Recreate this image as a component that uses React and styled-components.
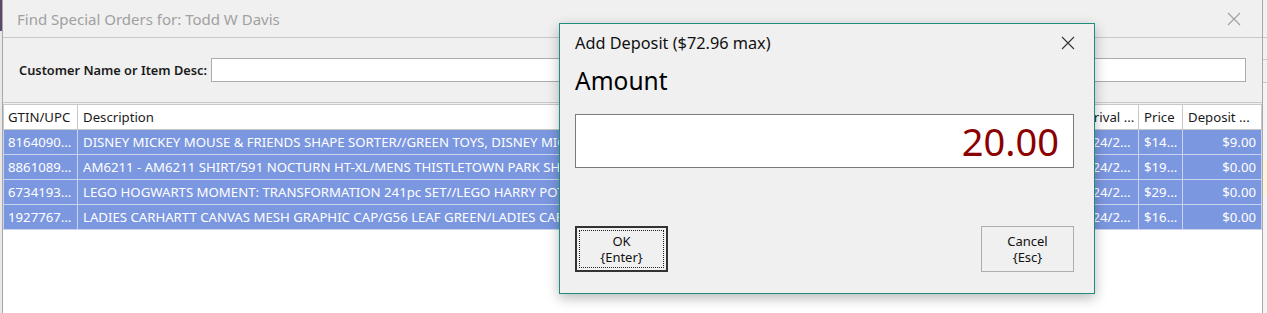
import React from "react";
import styled, { createGlobalStyle } from "styled-components";

const Global = createGlobalStyle`
  html, body { margin: 0; padding: 0; }
  body {
    width: 1267px; height: 313px; overflow: hidden;
    background: #f0f0f0;
    font-family: "Segoe UI", "Noto Sans", "Open Sans", sans-serif;
  }
`;

const Screen = styled.div`
  position: relative;
  display: flex;
  width: 1267px;
  height: 313px;
  overflow: hidden;
`;

const LeftStrip = styled.div`
  width: 2px;
  background: linear-gradient(#5a4a6a 0 10%, #e8e8e8 10% 100%);
`;

const Window = styled.div`
  width: 1259px;
  height: 313px;
  border-left: 1px solid #a8a8a8;
  border-right: 1px solid #a8a8a8;
  display: flex;
  flex-direction: column;
  background: #f0f0f0;
`;

const BackStrip = styled.div`
  flex: 1;
  display: flex;
  flex-direction: column;
  background: #f4f4f4;
`;

const BackPiece = styled.div`
  height: ${(p) => p.h}px;
  background: ${(p) => p.bg};
  border-bottom: ${(p) => (p.line ? "1px solid #c8c8c8" : "none")};
`;

const TitleBar = styled.div`
  height: 37px;
  display: flex;
  align-items: center;
  justify-content: space-between;
  padding: 0 21px 0 14px;
  border-bottom: 1px solid #c8c8c8;
  color: #a0a0a0;
  font-size: 15px;
`;

const CloseX = styled.svg`
  display: block;
`;

const SearchPanel = styled.div`
  height: 64px;
  display: flex;
  align-items: center;
  padding: 0 16px 0 16px;
  gap: 4px;
  border-bottom: 1px solid #c8c8c8;
`;

const Label = styled.label`
  font-size: 12.8px;
  font-weight: 600;
  color: #1a1a1a;
  white-space: nowrap;
`;

const SearchInput = styled.div`
  flex: 1;
  height: 22px;
  background: #fff;
  border: 1px solid #acacac;
`;

const Grid = styled.div`
  flex: 1;
  margin-top: 1px;
  background: #fff;
  border-top: 1px solid #c8c8c8;
  display: flex;
  flex-direction: column;
`;

const cols = "75px 997px 64px 44px 1fr";

const Row = styled.div`
  display: grid;
  grid-template-columns: ${cols};
  height: 24px;
  background: ${(p) => (p.head ? "#fff" : "#7b97e0")};
  border-bottom: 1px solid ${(p) => (p.head ? "#c8c8c8" : "#c9d3ee")};
`;

const Cell = styled.div`
  display: flex;
  align-items: center;
  justify-content: ${(p) => (p.right ? "flex-end" : "flex-start")};
  padding: 0 5px 0 5px;
  overflow: hidden;
  white-space: nowrap;
  font-size: 13.2px;
  color: ${(p) => (p.head ? "#1a1a1a" : "#fff")};
  border-right: 1px solid ${(p) => (p.head ? "#c8c8c8" : "#c9d3ee")};
  ${(p) => (p.first ? `border-left: 1px solid ${p.head ? "#c8c8c8" : "#c9d3ee"}; padding-left: 4px;` : "")}
`;

const Dialog = styled.div`
  position: absolute;
  left: 559px;
  top: 23px;
  box-sizing: border-box;
  width: 536px;
  height: 271px;
  background: #f0f0f0;
  border: 1px solid #1d8e7c;
  box-shadow: 0 4px 12px rgba(0, 0, 0, 0.28);
  display: flex;
  flex-direction: column;
  padding: 0 20px 0 15px;
`;

const DlgTitle = styled.div`
  height: 38px;
  display: flex;
  align-items: center;
  justify-content: space-between;
  font-size: 16.3px;
  color: #111;
  margin-right: -1px;
`;

const Heading = styled.div`
  font-size: 24.5px;
  color: #000;
  height: 36px;
  display: flex;
  align-items: center;
`;

const AmountBox = styled.div`
  margin-top: 16px;
  height: 52px;
  background: #fff;
  border: 1px solid #7a7a7a;
  display: flex;
  align-items: center;
  justify-content: flex-end;
  padding-right: 14px;
  font-size: 38px;
  color: #8b0000;
`;

const Buttons = styled.div`
  margin-top: 58px;
  display: flex;
  justify-content: space-between;
`;

const Button = styled.button`
  width: 93px;
  height: 46px;
  box-sizing: border-box;
  font-family: inherit;
  font-size: 13px;
  line-height: 16px;
  color: #111;
  background: #f0f0f0;
  border: ${(p) => (p.primary ? "2px solid #333" : "1px solid #adadad")};
  padding: 0;
  display: flex;
  align-items: center;
  justify-content: center;
  position: relative;
`;

const Focus = styled.span`
  position: absolute;
  inset: 2px;
  border: 1px dotted #222;
`;

const Label2 = styled.span`
  position: relative;
  text-align: center;
`;

const X = ({ size, color }) => (
  <CloseX width={size} height={size} viewBox="0 0 14 14">
    <path d="M1 1 L13 13 M13 1 L1 13" stroke={color} strokeWidth="1.1" fill="none" />
  </CloseX>
);

const rows = [
  ["8164090...", "DISNEY MICKEY MOUSE & FRIENDS SHAPE SORTER//GREEN TOYS, DISNEY MICKEY MOUSE & FRIENDS", "5/24/2...", "$14...", "$9.00"],
  ["8861089...", "AM6211 - AM6211 SHIRT/591 NOCTURN HT-XL/MENS THISTLETOWN PARK SHIRT", "5/24/2...", "$19...", "$0.00"],
  ["6734193...", "LEGO HOGWARTS MOMENT: TRANSFORMATION 241pc SET//LEGO HARRY POTTER", "5/24/2...", "$29...", "$0.00"],
  ["1927767...", "LADIES CARHARTT CANVAS MESH GRAPHIC CAP/G56 LEAF GREEN/LADIES CAP", "5/24/2...", "$16...", "$0.00"],
];

export default function App() {
  return (
    <>
      <Global />
      <Screen>
        <LeftStrip />
        <Window>
          <TitleBar>
            <span>Find Special Orders for: Todd W Davis</span>
            <X size={14} color="#a0a0a0" />
          </TitleBar>
          <SearchPanel>
            <Label>Customer Name or Item Desc:</Label>
            <SearchInput />
          </SearchPanel>
          <Grid>
            <Row head>
              <Cell head first>GTIN/UPC</Cell>
              <Cell head>Description</Cell>
              <Cell head>Arrival ...</Cell>
              <Cell head>Price</Cell>
              <Cell head>Deposit ...</Cell>
            </Row>
            {rows.map((r) => (
              <Row key={r[0]}>
                <Cell first>{r[0]}</Cell>
                <Cell>{r[1]}</Cell>
                <Cell>{r[2]}</Cell>
                <Cell>{r[3]}</Cell>
                <Cell right>{r[4]}</Cell>
              </Row>
            ))}
          </Grid>
        </Window>
        <BackStrip>
          <BackPiece h={37} bg="#f0f0f0" line />
          <BackPiece h={22} bg="#f0f0f0" line />
          <BackPiece h={22} bg="#f0f0f0" line />
          <BackPiece h={78} bg="#f4f4f4" />
          <BackPiece h={35} bg="#fdf6d8" />
          <BackPiece h={119} bg="#f4f4f4" />
        </BackStrip>
        <Dialog>
          <DlgTitle>
            <span>Add Deposit ($72.96 max)</span>
            <X size={14} color="#333" />
          </DlgTitle>
          <Heading>Amount</Heading>
          <AmountBox>20.00</AmountBox>
          <Buttons>
            <Button primary>
              <Focus />
              <Label2>OK<br />{"{Enter}"}</Label2>
            </Button>
            <Button>
              <Label2>Cancel<br />{"{Esc}"}</Label2>
            </Button>
          </Buttons>
        </Dialog>
      </Screen>
    </>
  );
}
